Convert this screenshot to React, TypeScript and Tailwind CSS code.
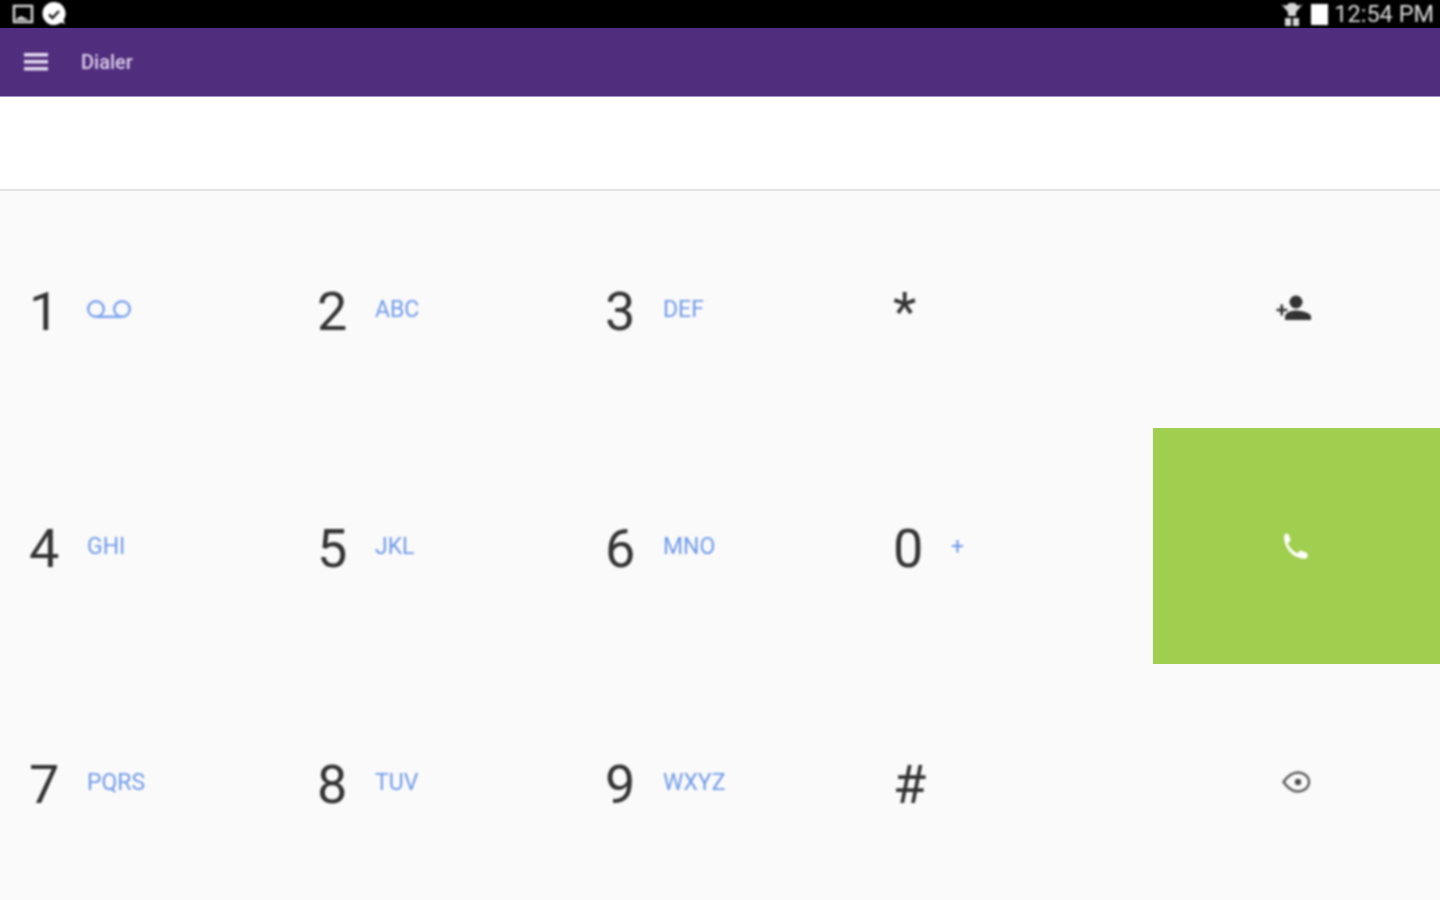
const keys = [
  { digit: '1', letters: 'voicemail' },
  { digit: '2', letters: 'ABC' },
  { digit: '3', letters: 'DEF' },
  { digit: '*', letters: '' },
  { digit: '4', letters: 'GHI' },
  { digit: '5', letters: 'JKL' },
  { digit: '6', letters: 'MNO' },
  { digit: '0', letters: '+' },
  { digit: '7', letters: 'PQRS' },
  { digit: '8', letters: 'TUV' },
  { digit: '9', letters: 'WXYZ' },
  { digit: '#', letters: '' },
];

function Voicemail() {
  return (
    <svg width="44" height="21" viewBox="0 0 44 21" fill="none" stroke="#7aa3ec" strokeWidth="2.4" className="-mt-px ml-px blur-[0.8px]">
      <circle cx="9" cy="10" r="7.800" />
      <circle cx="35" cy="10" r="7.800" />
      <path d="M9 17.800h26" />
    </svg>
  );
}

function AddPerson() {
  return (
    <svg width="36" height="28" viewBox="0 0 36 28" fill="#333333" className="-ml-[5px] -mt-[3px] blur-[0.8px]">
      <circle cx="20" cy="8" r="6.500" />
      <path d="M9 26v-3.500c0-4 7-6 11-6s15 2 15 6V26z" />
      <path d="M4.500 10.500h2.600v4.200h4.200v2.600H7.100v4.200H4.500v-4.200H.5v-2.600h4z" />
    </svg>
  );
}

function Phone() {
  return (
    <svg width="33" height="33" viewBox="0 0 24 24" fill="#ffffff" className="-ml-1 blur-[0.8px]">
      <path d="M6.600 2.500c.5 0 .9.3 1.100.8l1.400 3.600c.1.4 0 .8-.3 1.100L7.100 9.700c.9 2.600 4 6 7 7.200l1.800-1.700c.3-.3.7-.4 1.100-.2l3.700 1.500c.5.2.8.6.8 1.100v1.300c0 1.100-1 2.100-2.200 2-9.500-.6-14.800-8.800-14.900-15.900 0-1.500 1-2.500 2.200-2.500z" />
    </svg>
  );
}

function Eye() {
  return (
    <svg width="30" height="24" viewBox="0 0 30 24" fill="none" stroke="#5a5a5a" strokeWidth="2.400" className="blur-[0.8px]">
      <path d="M1.500 12C5 7 10 2.500 16 2.500c5 0 11 3.500 11 9.500s-6 9.500-11 9.500C10 21.500 5 17 1.500 12z" />
      <circle cx="16" cy="12" r="3.200" fill="#4d4d4d" stroke="none" />
    </svg>
  );
}

export default function App() {
  return (
    <div className="h-[900px] overflow-hidden bg-[#fafafa] font-['Roboto',sans-serif]">
      {/* status bar */}
      <div className="flex h-7 items-center justify-between bg-black pl-3 pr-1.5">
        <div className="flex items-center gap-[7px] blur-[0.8px]">
          <svg width="22" height="20" viewBox="0 0 22 20">
            <rect x="2" y="2" width="18" height="16" fill="none" stroke="#d8d8d8" strokeWidth="2.500" />
            <path d="M4 15l5-3 8 4H4z" fill="#d8d8d8" />
          </svg>
          <svg width="26" height="26" viewBox="0 0 26 26">
            <path d="M13 1a11.500 11.500 0 1 0 0 23c3 0 5-1 7-2.500l4 1.500-1.500-4a11.500 11.500 0 0 0-9.500-18z" fill="#ffffff" />
            <path d="M8 13.500l3.500 3.500 6.500-7" fill="none" stroke="#222222" strokeWidth="2.500" />
          </svg>
        </div>
        <div className="flex items-center blur-[0.8px]">
          <svg width="24" height="26" viewBox="0 0 24 26" fill="#d8d8d8">
            <path d="M1 3c4 2.500 6 2 8-1h6c2 3 4 3.500 8 1l-7 8v4H8v-4z" />
            <rect x="5" y="17" width="6" height="8" />
            <rect x="13" y="17" width="6" height="8" />
          </svg>
          <div className="ml-[7px] h-[21px] w-[17px] bg-white" />
          <span className="ml-[6px] text-[23.5px] leading-7 text-[#dcdcdc]">12:54 PM</span>
        </div>
      </div>

      {/* toolbar */}
      <div className="flex h-[69px] items-center border-b border-[#a58fc4] bg-[#512d7d] pl-6">
        <svg width="24" height="18" viewBox="0 0 24 18" fill="#e6dcf2" className="blur-[0.8px]">
          <rect y="0" width="24" height="3.500" />
          <rect y="7" width="24" height="3.500" />
          <rect y="14" width="24" height="3.500" />
        </svg>
        <span className="ml-[33px] text-xl font-medium text-[#dcd0ec] blur-[0.8px]">Dialer</span>
      </div>

      {/* number field */}
      <div className="h-[94px] border-b-2 border-[#e4e4e4] bg-white" />

      {/* keypad */}
      <div className="grid grid-cols-[288px_288px_288px_289px_287px] grid-rows-[237px_236px_236px]">
        {keys.map((key, i) => (
          <div key={key.digit} className="contents">
            <div className="flex items-center pl-[29px]">
              <span className="mt-1 w-[57px] text-[54px] text-[#333333] blur-[0.8px]">{key.digit}</span>
              {key.letters === 'voicemail' ? (
                <Voicemail />
              ) : (
                <span className="ml-px mt-0.5 text-[23px] text-[#6f9ae8] blur-[0.8px]">{key.letters}</span>
              )}
            </div>
            {i === 3 && (
              <div className="flex items-center justify-center">
                <AddPerson />
              </div>
            )}
            {i === 7 && (
              <div className="flex items-center justify-center bg-[#a0ce4e]">
                <Phone />
              </div>
            )}
            {i === 11 && (
              <div className="flex items-center justify-center">
                <Eye />
              </div>
            )}
          </div>
        ))}
      </div>
    </div>
  );
}
